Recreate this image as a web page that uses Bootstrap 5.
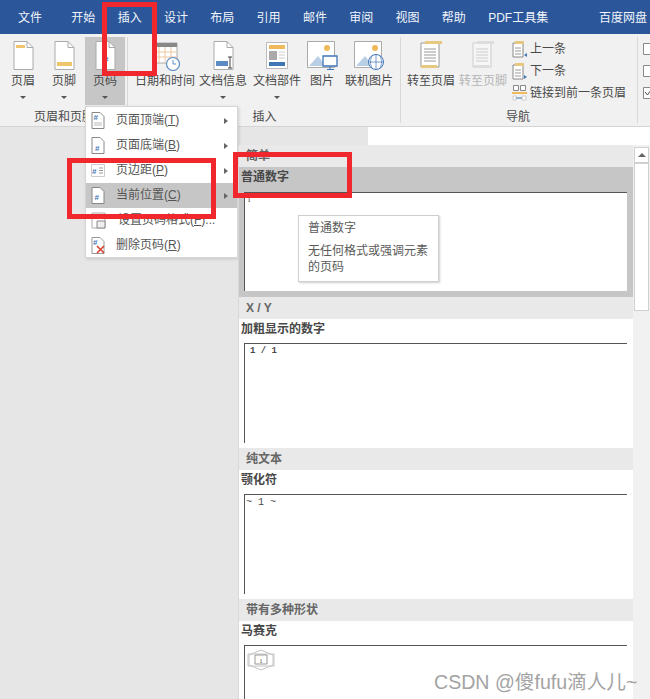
<!DOCTYPE html>
<html lang="zh">
<head>
  <meta charset="UTF-8">
  <title>页码</title>
  <link href="https://cdn.jsdelivr.net/npm/bootstrap@5.3.0/dist/css/bootstrap.min.css" rel="stylesheet">
  <style>
    body { width: 650px; height: 699px; overflow: hidden; background: #e6e6e6; font-family: "Liberation Sans", "Noto Sans CJK SC", sans-serif; font-size: 12px; color: #4a4a4a; position: relative; }
    .tabbar { height: 34px; background: #2b579a; color: #f2f5fa; gap: 22.3px; padding: 10px 3px 0 18px; line-height: 16px; white-space: nowrap; }
    .tab-first { margin-right: 7px; }
    .ribbon { height: 93px; background: #f1f1f1; border-bottom: 1px solid #d4d4d4; overflow: hidden; }
    .grp { height: 91px; flex: none; }
    .grp-a { width: 122px; margin-left: 3px; }
    .grp-b { width: 259px; margin-left: 7px; }
    .grp-c { width: 232px; margin-left: 4px; }
    .grp-tools { height: 74px; }
    .grp-name { line-height: 16px; margin-top: 1px; text-align: center; white-space: nowrap; }
    .grp-c .grp-name { padding-right: 6px; }
    .rb { width: 40px; height: 74px; padding-top: 7px; flex: none; }
    .rb-on { background: #c6c6c6; height: 68px; margin-top: 3px; padding-top: 4px; }
    .rb svg { display: block; flex: none; }
    .rb-label { line-height: 16px; white-space: nowrap; margin-top: 2px; }
    .rb-gap2 { margin-top: 4px; }
    .w-date { width: 60px; margin-right: 1px; }
    .w-doc { width: 54px; }
    .w-pic { width: 36px; margin-right: 4px; }
    .w-online { width: 50px; }
    .w-goto { width: 52px; }
    .caret-down { width: 0; height: 0; border: 3px solid transparent; border-top: 3px solid #555; border-bottom: 0; margin-top: 7px; }
    .grp-sep { width: 1px; height: 86px; background: #d8d8d8; margin-top: 3px; flex: none; }
    .sep-a { margin-left: 2px; }
    .sep-b { margin-left: 6px; }
    .nav-col { margin-left: 3px; padding-top: 4px; width: 124px; }
    .nav-row { height: 22px; line-height: 22px; white-space: nowrap; gap: 3px; }
    .off { color: #b5b5b5; }
    .check-col { margin-left: 5px; padding-top: 9px; gap: 10px; flex: none; }
    .ruler { height: 18px; }
    .ruler-w { width: 282px; background: #fff; }
    .popmenu { position: absolute; left: 85px; top: 106px; width: 153px; height: 152px; background: #fff; border: 1px solid #d6d6d6; box-shadow: 1px 1px 3px rgba(0,0,0,.15); padding-top: 1px; color: #555; }
    .mi { height: 25px; padding-left: 5px; line-height: 25px; }
    .mi svg { flex: none; margin-right: 11px; }
    .mi-on { background: #c6c6c6; }
    .mi-arrow { width: 0; height: 0; border: 3.5px solid transparent; border-left: 4px solid #666; border-right: 0; margin-left: auto; margin-right: 9px; }
    .gallery { position: absolute; left: 238px; top: 145px; width: 412px; height: 554px; background: #fff; border-left: 1px solid #d8d8d8; overflow: hidden; }
    .gal-head { height: 22px; background: #e9e9e9; padding-left: 7px; width: 394px; font-weight: 700; color: #666; line-height: 22px; }
    .gal-title { height: 24px; padding-left: 2px; font-weight: 700; color: #484848; line-height: 20px; }
    .gal-box { height: 100px; margin-left: 5px; width: 383px; border-left: 1px solid #555; border-top: 1px solid #555; }
    .gal-sel { background: #c6c6c6; width: 394px; height: 130px; }
    .gal-sel .gal-title { height: 25px; }
    .gal-sel .gal-box { background: #fff; height: 99px; }
    .gal-plain { height: 129px; }
    .num-plain { font: 8px/10px "Liberation Serif", serif; padding: 2px 0 0 2px; }
    .num-bold { font: 700 9px/10px "Liberation Mono", monospace; padding: 2px 0 0 5px; }
    .num-tilde { font: 10px/12px "Liberation Mono", monospace; padding: 2px 0 0 1px; }
    .num-mosaic { padding: 3px 0 0 2px; }
    .scroll { position: absolute; right: 0; top: 0; width: 17px; height: 554px; background: #f1f1f1; }
    .scroll-up { height: 16px; background: #fff; border: 1px solid #d0d0d0; display: flex; align-items: center; justify-content: center; margin: 2px 1px 0 1px; }
    .scroll-up i { width: 0; height: 0; border: 4px solid transparent; border-bottom: 4px solid #666; border-top: 0; }
    .scroll-th { height: 148px; background: #fff; border: 1px solid #d0d0d0; margin: 0 1px; }
    .tip { position: absolute; left: 59px; top: 70px; width: 141px; height: 67px; background: #fff; border: 1px solid #cfcfcf; box-shadow: 1px 1px 2px rgba(0,0,0,.2); padding: 4px 9px; color: #5a5a5a; line-height: 16px; }
    .tip-body { margin-top: 7px; }
    .redbox { position: absolute; border: 5px solid #f0282d; }
    .red-tab { left: 102px; top: 2px; width: 55px; height: 74px; }
    .red-menu { left: 67px; top: 158px; width: 149px; height: 61px; }
    .red-gal { left: 233px; top: 152px; width: 119px; height: 46px; }
    .mark-csdn { position: absolute; left: 434px; top: 670px; font-size: 19.6px; line-height: 24px; color: #a3a3a3; white-space: nowrap; }
    .ico-hash { font: 700 8px "Liberation Sans", sans-serif; fill: #3f76b5; }
  </style>
</head>
<body>
  <div class="tabbar d-flex">
    <span class="tab-first">文件</span><span>开始</span><span>插入</span><span>设计</span><span>布局</span><span>引用</span><span>邮件</span><span>审阅</span><span>视图</span><span>帮助</span><span>PDF工具集</span><span class="ms-auto">百度网盘</span>
  </div>

  <div class="ribbon d-flex">
    <div class="grp grp-a">
      <div class="grp-tools d-flex gap-0">
        <div class="rb d-flex flex-column align-items-center">
          <svg width="21" height="30" viewBox="0 0 21 30"><path d="M1 .5h13l6 6v22H1z" fill="#fff" stroke="#aaa"/><path d="M14 .5v6h6" fill="none" stroke="#aaa"/><path d="M3 4h9v3H3z" fill="#f0c36d"/></svg>
          <div class="rb-label">页眉</div><div class="caret-down"></div>
        </div>
        <div class="rb d-flex flex-column align-items-center ms-auto">
          <svg width="21" height="30" viewBox="0 0 21 30"><path d="M1 .5h13l6 6v22H1z" fill="#fff" stroke="#aaa"/><path d="M14 .5v6h6" fill="none" stroke="#aaa"/><path d="M3 21h15v4H3z" fill="#f0c36d"/></svg>
          <div class="rb-label">页脚</div><div class="caret-down"></div>
        </div>
        <div class="rb rb-on d-flex flex-column align-items-center ms-auto">
          <svg width="21" height="30" viewBox="0 0 21 30"><path d="M1 .5h13l6 6v22H1z" fill="#fff" stroke="#aaa"/><path d="M14 .5v6h6" fill="none" stroke="#aaa"/><text x="9" y="21" class="ico-hash">#</text></svg>
          <div class="rb-label">页码</div><div class="caret-down"></div>
        </div>
      </div>
      <div class="grp-name">页眉和页脚</div>
    </div>
    <div class="grp-sep sep-a"></div>

    <div class="grp grp-b">
      <div class="grp-tools d-flex">
        <div class="rb w-date d-flex flex-column align-items-center">
          <svg width="30" height="30" viewBox="0 0 30 30"><path d="M3 2h24v20H3z" fill="#fff" stroke="#aaa"/><path d="M3 2h24v4H3z" fill="#888"/><path d="M9 6v16M15 6v16M21 6v16M3 11h24M3 16h24" stroke="#f0c9a0"/><circle cx="23" cy="23" r="6.500" fill="#fff" stroke="#5b8cc4" stroke-width="1.2"/><path d="M23 19v4h3" fill="none" stroke="#5b8cc4"/></svg>
          <div class="rb-label">日期和时间</div>
        </div>
        <div class="rb w-doc d-flex flex-column align-items-center">
          <svg width="21" height="30" viewBox="0 0 21 30"><path d="M1 .5h13l6 6v22H1z" fill="#fff" stroke="#aaa"/><path d="M14 .5v6h6" fill="none" stroke="#aaa"/><path d="M3 20h12v5H3z" fill="#5b8cc4"/><path d="M17 16v11M15 16h4M15 27h4" stroke="#444"/></svg>
          <div class="rb-label">文档信息</div><div class="caret-down"></div>
        </div>
        <div class="rb w-doc d-flex flex-column align-items-center">
          <svg width="22" height="28" viewBox="0 0 22 28"><path d="M.5 1.500h21v26H.5z" fill="#fff" stroke="#bbb"/><path d="M3 4h16v4H3z" fill="#f0b95c"/><path d="M3 10h8v9H3z" fill="#aaa"/><path d="M13 11h6M13 14h6M13 17h6" stroke="#ccc"/><path d="M3 21h16v4H3z" fill="#3f76b5"/></svg>
          <div class="rb-label rb-gap2">文档部件</div><div class="caret-down"></div>
        </div>
        <div class="rb w-pic d-flex flex-column align-items-center">
          <svg width="31" height="30" viewBox="0 0 31 30"><path d="M.5 .5h27v26H.5z" fill="#fff" stroke="#aaa"/><circle cx="20" cy="7" r="3" fill="#f0b95c"/><path d="M2 25l9-10 8 10z" fill="#b9cfe5"/><path d="M16 15h14v10H16z" fill="#fff" stroke="#3f76b5" stroke-width="1.300"/><path d="M23 25v3M20 28.500h7" stroke="#3f76b5"/></svg>
          <div class="rb-label">图片</div>
        </div>
        <div class="rb w-online d-flex flex-column align-items-center">
          <svg width="30" height="30" viewBox="0 0 30 30"><path d="M.5 .5h27v26H.5z" fill="#fff" stroke="#aaa"/><circle cx="21" cy="7" r="3" fill="#f0b95c"/><path d="M2 25l9-10 8 10z" fill="#b9cfe5"/><circle cx="22" cy="21" r="7.500" fill="#fff" stroke="#3f76b5"/><path d="M14.500 21h15M22 13.500v15M18 15c-2 4-2 8 0 12M26 15c2 4 2 8 0 12" fill="none" stroke="#3f76b5" stroke-width=".7"/></svg>
          <div class="rb-label">联机图片</div>
        </div>
      </div>
      <div class="grp-name">插入</div>
    </div>
    <div class="grp-sep sep-b"></div>

    <div class="grp grp-c">
      <div class="grp-tools d-flex">
        <div class="rb w-goto d-flex flex-column align-items-center">
          <svg width="24" height="28" viewBox="0 0 24 28"><path d="M2 2h18v24H2z" fill="#fff" stroke="#999"/><path d="M6 0h17v3H6zM2 24h16v3H2z" fill="#e8c77e"/><path d="M5 8h12M5 11h12M5 14h12M5 17h12M5 20h12" stroke="#999"/></svg>
          <div class="rb-label rb-gap2">转至页眉</div>
        </div>
        <div class="rb w-goto d-flex flex-column align-items-center off">
          <svg width="24" height="28" viewBox="0 0 24 28"><path d="M2 2h18v24H2z" fill="#f6f6f6" stroke="#ccc"/><path d="M6 0h17v3H6zM2 24h16v3H2z" fill="#ddd"/><path d="M5 8h12M5 11h12M5 14h12M5 17h12M5 20h12" stroke="#ccc"/></svg>
          <div class="rb-label rb-gap2">转至页脚</div>
        </div>
        <div class="nav-col">
          <div class="nav-row d-flex align-items-center"><svg width="15" height="18" viewBox="0 0 15 18"><path d="M1 3h10v14H1z" fill="#fff" stroke="#888"/><path d="M3 1h9v3H3z" fill="#e8c77e"/><path d="M3 8h6M3 11h6M3 14h6" stroke="#999"/><path d="M15 13l-3 2 3 2z" fill="#3f76b5"/></svg>上一条</div>
          <div class="nav-row d-flex align-items-center"><svg width="15" height="18" viewBox="0 0 15 18"><path d="M1 3h10v14H1z" fill="#fff" stroke="#888"/><path d="M3 1h9v3H3z" fill="#e8c77e"/><path d="M3 8h6M3 11h6M3 14h6" stroke="#999"/><path d="M12 13l3 2-3 2z" fill="#3f76b5"/></svg>下一条</div>
          <div class="nav-row d-flex align-items-center"><svg width="15" height="18" viewBox="0 0 15 18"><path d="M1.500 1.500h5v5h-5zM8.500 1.500h5v5h-5z" fill="#fff" stroke="#888"/><path d="M0 8h15v2H0z" fill="#f0b95c"/><path d="M1 12h3v4H1zM10 12h4v4h-4z" fill="#fff" stroke="#ccc"/><path d="M4 14h6" stroke="#3f76b5"/></svg>链接到前一条页眉</div>
        </div>
      </div>
      <div class="grp-name">导航</div>
    </div>
    <div class="grp-sep"></div>
    <div class="d-flex flex-column check-col">
      <svg width="14" height="12" viewBox="0 0 14 12"><path d="M.5 .5h13v11H.5z" fill="#fff" stroke="#888"/></svg>
      <svg width="14" height="12" viewBox="0 0 14 12"><path d="M.5 .5h13v11H.5z" fill="#fff" stroke="#888"/></svg>
      <svg width="14" height="12" viewBox="0 0 14 12"><path d="M.5 .5h13v11H.5z" fill="#fff" stroke="#888"/><path d="M2 5l2.500 3L8 3" fill="none" stroke="#555"/></svg>
    </div>
  </div>
  <div class="ruler d-flex justify-content-end"><div class="ruler-w"></div></div>

  <div class="popmenu">
    <div class="mi d-flex align-items-center"><svg width="14" height="17" viewBox="0 0 14 17"><path d="M1 .5h8l4 4v12H1z" fill="#fff" stroke="#888"/><text x="2.500" y="8" class="ico-hash">#</text><path d="M3 11h8M3 13h8" stroke="#bbb"/></svg>页面顶端(<u>T</u>)<i class="mi-arrow"></i></div>
    <div class="mi d-flex align-items-center"><svg width="14" height="17" viewBox="0 0 14 17"><path d="M1 .5h8l4 4v12H1z" fill="#fff" stroke="#888"/><text x="4" y="14" class="ico-hash">#</text></svg>页面底端(<u>B</u>)<i class="mi-arrow"></i></div>
    <div class="mi d-flex align-items-center"><svg width="14" height="17" viewBox="0 0 14 17"><path d="M.5 2.500h13v12H.5z" fill="#fff" stroke="#ccc"/><text x="1" y="11.500" class="ico-hash">#</text><path d="M8 6h4M8 8.500h4M8 11h4" stroke="#999"/></svg>页边距(<u>P</u>)<i class="mi-arrow"></i></div>
    <div class="mi mi-on d-flex align-items-center"><svg width="14" height="17" viewBox="0 0 14 17"><path d="M1 .5h8l4 4v12H1z" fill="#fff" stroke="#888"/><text x="3.500" y="13" class="ico-hash">#</text></svg>当前位置(<u>C</u>)<i class="mi-arrow"></i></div>
    <div class="mi d-flex align-items-center"><svg width="16" height="17" viewBox="0 0 16 17"><path d="M1 1h13v15H1z" fill="#fff" stroke="#aaa"/><path d="M6 9h8v7H6z" fill="#eee" stroke="#888"/></svg>设置页码格式(<u>F</u>)...</div>
    <div class="mi d-flex align-items-center"><svg width="14" height="17" viewBox="0 0 14 17"><path d="M1 .5h8l4 4v12H1z" fill="#fff" stroke="#999"/><text x="2" y="8" class="ico-hash">#</text><path d="M6 9l7 7M13 9l-7 7" stroke="#d9412f" stroke-width="1.600"/></svg>删除页码(<u>R</u>)</div>
  </div>

  <div class="gallery">
    <div class="gal-head">简单</div>
    <div class="gal-sel">
      <div class="gal-title">普通数字</div>
      <div class="gal-box num-plain">1</div>
    </div>
    <div class="gal-head">X / Y</div>
    <div class="gal-plain">
      <div class="gal-title">加粗显示的数字</div>
      <div class="gal-box num-bold">1 / 1</div>
    </div>
    <div class="gal-head">纯文本</div>
    <div class="gal-plain">
      <div class="gal-title">颚化符</div>
      <div class="gal-box num-tilde">~ 1 ~</div>
    </div>
    <div class="gal-head">带有多种形状</div>
    <div class="gal-plain">
      <div class="gal-title">马赛克</div>
      <div class="gal-box num-mosaic"><svg width="28" height="22" viewBox="0 0 28 22"><path d="M14 1l12 5v10l-12 5-12-5V6z" fill="none" stroke="#c4c4c4"/><path d="M1 5h26v12H1z" fill="none" stroke="#c4c4c4"/><path d="M8 6h12v9H8z" fill="#fff" stroke="#999"/><text x="14" y="13.500" font-size="7" font-family="Liberation Serif" text-anchor="middle" fill="#555">1</text></svg></div>
    </div>
    <div class="tip"><div>普通数字</div><div class="tip-body">无任何格式或强调元素的页码</div></div>
    <div class="scroll"><div class="scroll-up"><i></i></div><div class="scroll-th"></div></div>
  </div>

  <div class="redbox red-tab"></div>
  <div class="redbox red-menu"></div>
  <div class="redbox red-gal"></div>
  <div class="mark-csdn">CSDN @傻fufu滴人儿~</div>

  <script src="https://cdn.jsdelivr.net/npm/bootstrap@5.3.0/dist/js/bootstrap.bundle.min.js"></script>
</body>
</html>
